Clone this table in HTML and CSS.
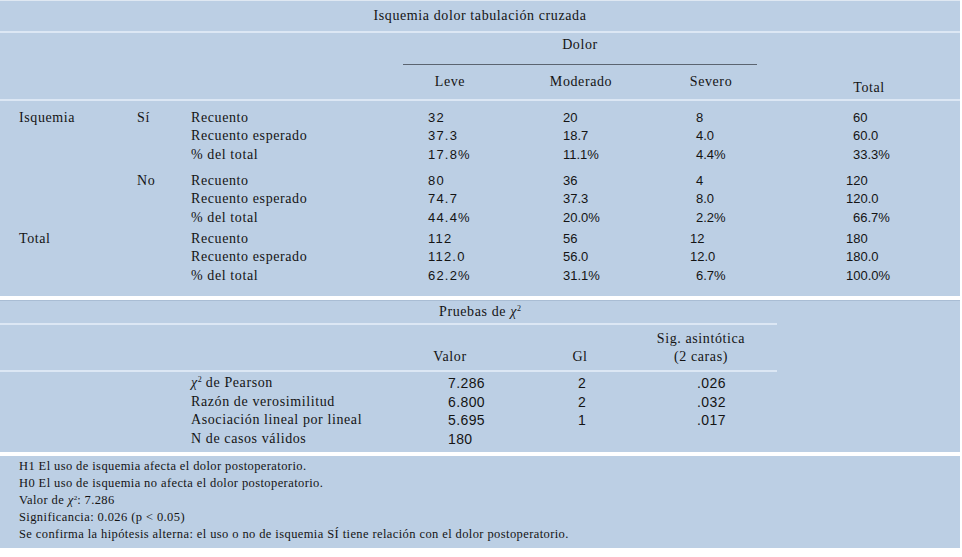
FILE: index.html
```html
<!DOCTYPE html>
<html lang="es">
<head>
<meta charset="utf-8">
<title>Isquemia dolor tabulación cruzada</title>
<link rel="stylesheet" href="styles.css">
</head>
<body>
<div class="page">
  <div class="title t-main">Isquemia dolor tabulación cruzada</div>

  <div class="ct-head">
    <div class="dolor">Dolor</div>
    <div class="sub sub-leve">Leve</div>
    <div class="sub sub-mod">Moderado</div>
    <div class="sub sub-sev">Severo</div>
    <div class="total-h">Total</div>
  </div>

  <div class="ct-body">
    <div class="grp">
      <div class="lbl">Isquemia</div><div class="lbl">Sí</div><div class="lbl">Recuento</div>
      <div class="num leve">32</div><div class="num">20</div><div class="num i6">8</div><div class="num i7">60</div>
      <div></div><div></div><div class="lbl">Recuento esperado</div>
      <div class="num leve">37.3</div><div class="num">18.7</div><div class="num i6">4.0</div><div class="num i7">60.0</div>
      <div></div><div></div><div class="lbl">% del total</div>
      <div class="num leve">17.8%</div><div class="num">11.1%</div><div class="num i6">4.4%</div><div class="num i7">33.3%</div>
    </div>
    <div class="grp g2">
      <div></div><div class="lbl">No</div><div class="lbl">Recuento</div>
      <div class="num leve">80</div><div class="num">36</div><div class="num i6">4</div><div class="num">120</div>
      <div></div><div></div><div class="lbl">Recuento esperado</div>
      <div class="num leve">74.7</div><div class="num">37.3</div><div class="num i6">8.0</div><div class="num">120.0</div>
      <div></div><div></div><div class="lbl">% del total</div>
      <div class="num leve">44.4%</div><div class="num">20.0%</div><div class="num i6">2.2%</div><div class="num i7">66.7%</div>
    </div>
    <div class="grp g3">
      <div class="lbl">Total</div><div></div><div class="lbl">Recuento</div>
      <div class="num leve">112</div><div class="num">56</div><div class="num">12</div><div class="num">180</div>
      <div></div><div></div><div class="lbl">Recuento esperado</div>
      <div class="num leve">112.0</div><div class="num">56.0</div><div class="num">12.0</div><div class="num">180.0</div>
      <div></div><div></div><div class="lbl">% del total</div>
      <div class="num leve">62.2%</div><div class="num">31.1%</div><div class="num i6">6.7%</div><div class="num">100.0%</div>
    </div>
  </div>

  <div class="title t-chi">Pruebas de <span class="chi">χ</span><sup>2</sup></div>

  <div class="chi-head">
    <div class="h-valor">Valor</div>
    <div class="h-gl">Gl</div>
    <div class="h-sig1">Sig. asintótica</div>
    <div class="h-sig2">(2 caras)</div>
  </div>

  <div class="chi-body">
    <div></div><div class="lbl"><span class="chi">χ</span><sup>2</sup> de Pearson</div><div class="cnum">7.286</div><div class="cnum">2</div><div class="cnum">.026</div>
    <div></div><div class="lbl">Razón de verosimilitud</div><div class="cnum">6.800</div><div class="cnum">2</div><div class="cnum">.032</div>
    <div></div><div class="lbl">Asociación lineal por lineal</div><div class="cnum">5.695</div><div class="cnum">1</div><div class="cnum">.017</div>
    <div></div><div class="lbl">N de casos válidos</div><div class="cnum">180</div><div></div><div></div>
  </div>

  <div class="notes">
    <p>H1 El uso de isquemia afecta el dolor postoperatorio.</p>
    <p>H0 El uso de isquemia no afecta el dolor postoperatorio.</p>
    <p>Valor de <span class="chi">χ</span><sup>2</sup>: 7.286</p>
    <p>Significancia: 0.026 (p &lt; 0.05)</p>
    <p>Se confirma la hipótesis alterna: el uso o no de isquemia SÍ tiene relación con el dolor postoperatorio.</p>
  </div>
</div>
</body>
</html>
```

FILE: styles.css
```css
* { box-sizing: border-box; }

html, body {
  margin: 0;
  padding: 0;
  background: #ffffff;
}

.page {
  width: 960px;
  background: #bccfe4;
  color: #141414;
  font-family: "Liberation Serif", "Times New Roman", serif;
  font-size: 14px;
  letter-spacing: 0.6px;
  border-top: 1px solid #dfe8f2;
}

.title {
  text-align: center;
}

.t-main {
  height: 30px;
  line-height: 30px;
}

/* crosstab header */
.ct-head {
  border-top: 2px solid #dce7f4;
  height: 68px;
  display: grid;
  grid-template-columns: 403px 94px 168px 92px 21px 182px;
  grid-template-rows: 32px 34px;
}

.dolor {
  grid-column: 2 / 5;
  grid-row: 1;
  text-align: center;
  line-height: 24px;
  padding-bottom: 7px;
  border-bottom: 1px solid #5b6470;
}

.sub {
  grid-row: 2;
  text-align: center;
  line-height: 34px;
}

.sub-leve { grid-column: 2; }
.sub-mod { grid-column: 3; }
.sub-sev { grid-column: 4; }

.total-h {
  grid-column: 6;
  grid-row: 1 / 3;
  align-self: end;
  text-align: center;
  line-height: 22px;
}

/* crosstab body */
.ct-body {
  border-top: 2px solid #dce7f4;
  padding: 7.75px 0 10.75px;
}

.grp {
  display: grid;
  grid-template-columns: 134px 57px 237px 135px 127px 156px 114px;
  grid-auto-rows: 18.5px;
  line-height: 18.5px;
}

.grp > div:first-child,
.grp > .lbl:first-child { padding-left: 19px; }

.grp > div:nth-child(7n+2) { padding-left: 3px; }

.g2 { margin-top: 7.5px; }
.g3 { margin-top: 2.5px; }

.lbl {
  white-space: nowrap;
}

.num {
  font-family: "Liberation Sans", Arial, sans-serif;
  font-size: 13px;
  letter-spacing: 0;
  white-space: nowrap;
}

.num.leve { letter-spacing: 1.2px; }
.i6 { padding-left: 6px; }
.i7 { padding-left: 7px; }

/* chi-square */
.t-chi {
  border-top: 4px solid #ffffff;
  box-shadow: inset 0 1px 0 #a9bdd4;
  height: 27px;
  line-height: 23px;
}

.chi {
  font-style: italic;
}

sup {
  font-size: 8px;
  line-height: 0;
  vertical-align: 5px;
  letter-spacing: 0;
}

.chi-head {
  border-top: 2px solid #dce7f4;
  border-bottom: 2px solid #dce7f4;
  width: 777px;
  padding: 5px 0 4px;
  display: grid;
  grid-template-columns: 420px 60px 60px 80px 20px 122px;
  grid-template-rows: 18px 18px;
  line-height: 18px;
}

.h-valor { grid-column: 2; grid-row: 2; text-align: center; }
.h-gl { grid-column: 4; grid-row: 2; text-align: center; }
.h-sig1 { grid-column: 6; grid-row: 1; text-align: center; white-space: nowrap; }
.h-sig2 { grid-column: 6; grid-row: 2; text-align: center; white-space: nowrap; }

.chi-body {
  padding: 2px 0 3.2px;
  display: grid;
  grid-template-columns: 191px 257px 130px 119px 263px;
  grid-auto-rows: 18.7px;
  line-height: 18.7px;
}

.cnum {
  font-family: "Liberation Sans", Arial, sans-serif;
  font-size: 14px;
  letter-spacing: 0.4px;
  white-space: nowrap;
}

/* notes */
.notes {
  border-top: 4px solid #ffffff;
  padding: 2.5px 19px 4.5px;
  font-size: 12.5px;
  letter-spacing: 0.4px;
  line-height: 17px;
}

.notes p {
  margin: 0;
  white-space: nowrap;
}

.notes sup {
  font-size: 7px;
  vertical-align: 4px;
}
```
